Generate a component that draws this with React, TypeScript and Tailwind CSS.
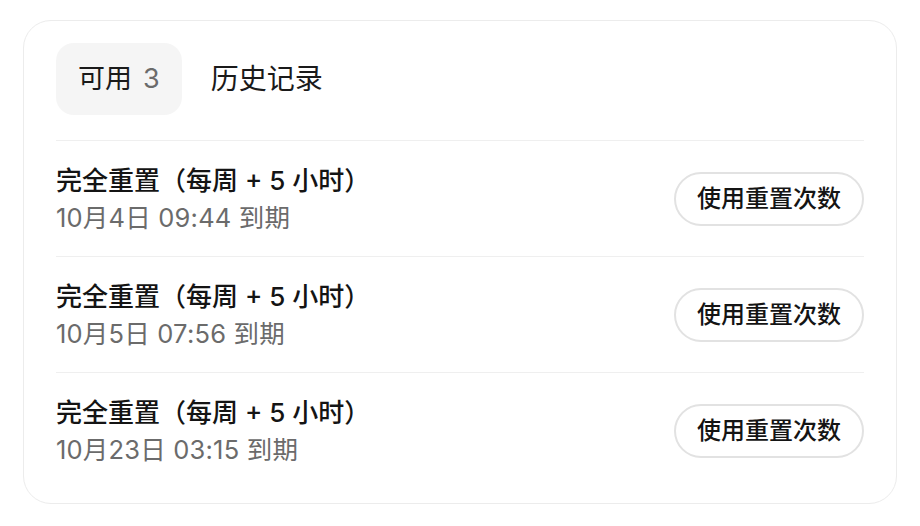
const rows = [
  { title: '完全重置（每周 + 5 小时）', expires: '10月4日 09:44 到期' },
  { title: '完全重置（每周 + 5 小时）', expires: '10月5日 07:56 到期' },
  { title: '完全重置（每周 + 5 小时）', expires: '10月23日 03:15 到期' },
];

export default function App() {
  return (
    <div
      className="w-[920px] h-[526px] bg-white pl-[23px] pt-[20px]"
      style={{ fontFamily: 'Inter, "Noto Sans CJK SC", sans-serif' }}
    >
      <div className="w-[874px] rounded-[28px] border border-[#ececec] px-[32px] pt-[22px] pb-[15px]">
        <div className="flex items-center gap-[7px]">
          <button className="h-[72px] px-[22px] rounded-[18px] bg-[#f5f5f5] text-[27px] text-[#1a1a1a] flex items-center">
            可用<span className="ml-[11px] text-[#6b6b6b]">3</span>
          </button>
          <button className="h-[72px] px-[22px] rounded-[18px] text-[28px] text-[#1a1a1a] flex items-center">
            历史记录
          </button>
        </div>

        <div className="mt-[25px]">
          {rows.map((r, i) => (
            <div
              key={i}
              className="h-[116px] border-t border-[#efefef] flex items-center justify-between"
            >
              <div className="pt-[2px]">
                <div className="text-[26px] leading-[37px] font-medium text-[#141414]">{r.title}</div>
                <div className="text-[25.5px] leading-[38px] text-[#6b6b6b] tracking-[0.2px]">{r.expires}</div>
              </div>
              <button className="h-[54px] w-[190px] rounded-full border-2 border-[#e2e2e2] text-[24px] font-medium text-[#141414] flex items-center justify-center">
                使用重置次数
              </button>
            </div>
          ))}
        </div>
      </div>
    </div>
  );
}
